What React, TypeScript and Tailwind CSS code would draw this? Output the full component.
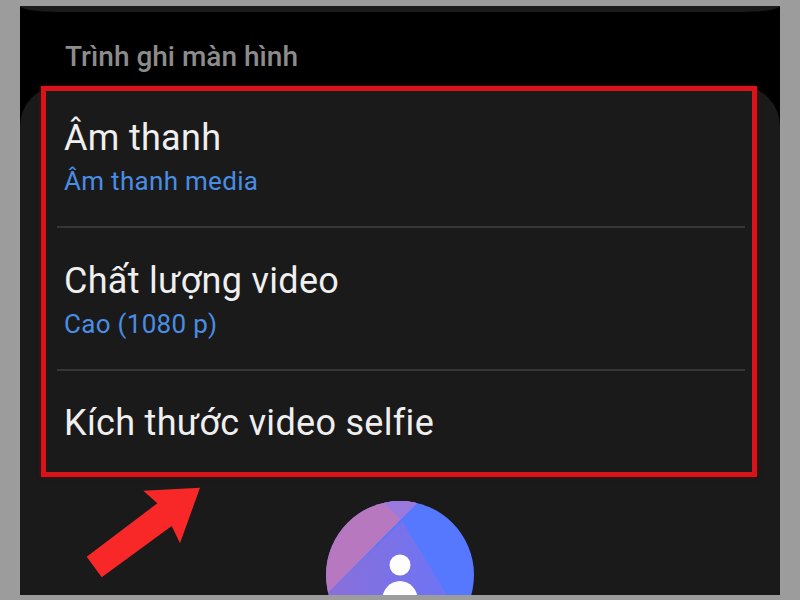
const font = { fontFamily: 'Roboto, "Noto Sans", sans-serif' };

function Row({ title, sub, className }: { title: string; sub?: string; className: string }) {
  return (
    <div className={`ml-[11px] mr-[7px] pl-[7px] ${className}`}>
      <div className="text-[36px] leading-[44px] text-[#efefef] tracking-[0.3px]">{title}</div>
      {sub && <div className="mt-[4px] text-[26px] leading-[34px] text-[#4a8de4] tracking-[0.3px]">{sub}</div>}
    </div>
  );
}

function Avatar() {
  return (
    <svg width="148" height="148" viewBox="0 0 148 148" className="block">
      <defs>
        <clipPath id="disc">
          <circle cx="74" cy="74" r="74" />
        </clipPath>
        <linearGradient id="mid" x1="0" y1="0" x2="1" y2="0">
          <stop offset="0" stopColor="#8a6fd8" />
          <stop offset="1" stopColor="#6c74f6" />
        </linearGradient>
      </defs>
      <g clipPath="url(#disc)">
        <rect width="148" height="148" fill="#5578ff" />
        <polygon points="76,20 125,100 125,148 0,148 0,94" fill="url(#mid)" />
        <polygon points="0,94 93,0 0,0" fill="#b878c0" />
        <polygon points="56,0 74,18 93,0" fill="#9a7ade" />
      </g>
      <circle cx="74" cy="64" r="10.5" fill="#fdfdfd" />
      <ellipse cx="74" cy="100" rx="18" ry="20" fill="#fdfdfd" />
    </svg>
  );
}

export default function App() {
  return (
    <div className="w-[800px] h-[600px] bg-[#9c9c9c] px-5 pt-[6px] overflow-hidden" style={font}>
      <div className="relative h-[589px] bg-black overflow-hidden flex flex-col">
        <div className="h-[6px] shrink-0 bg-[#1b1b1b] rounded-bl-[40px_6px] rounded-br-[40px_6px]" />

        <div className="h-[74px] shrink-0 pl-[45px] pt-[27px] text-[28px] leading-[36px] font-medium text-[#8c8c8c]">
          Trình ghi màn hình
        </div>

        <div className="flex-1 rounded-t-[40px] bg-[#1a1a1a] px-[21px]">
          <div className="w-[716px] h-[391px] border-[5px] border-[#d8141a] shadow-[0_0_4px_#5e0a0c] flex flex-col">
            <Row title="Âm thanh" sub="Âm thanh media" className="h-[137px] pt-[25px] border-b-2 border-[#363636]" />
            <Row title="Chất lượng video" sub="Cao (1080 p)" className="h-[143px] pt-[31px] border-b-2 border-[#363636]" />
            <Row title="Kích thước video selfie" className="flex-1 pt-[30px]" />
          </div>
          <div className="mt-6 flex justify-center">
            <Avatar />
          </div>
        </div>

        <svg width="120" height="100" viewBox="0 0 120 100" className="absolute left-[60px] top-[480px]">
          <polygon
            points="120,1.7 63.3,4.7 77.3,17.3 6.7,70.7 21.7,91.3 91.7,40 100,57.3"
            fill="#f82828"
          />
        </svg>
      </div>
    </div>
  );
}
